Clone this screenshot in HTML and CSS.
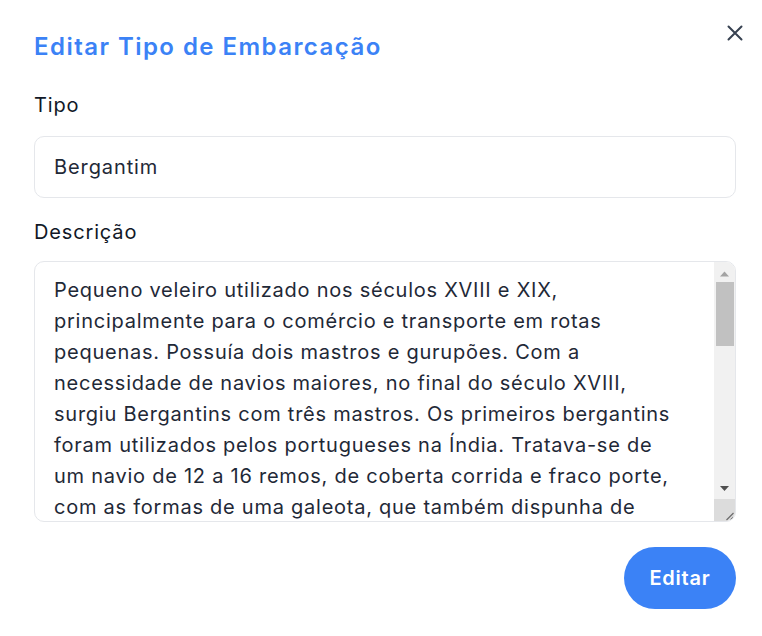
FILE: index.html
```html
<!DOCTYPE html>
<html lang="pt">
<head>
<meta charset="utf-8">
<title>Editar Tipo de Embarcação</title>
<link rel="stylesheet" href="styles.css">
</head>
<body>
<div class="modal">
  <div class="header">
    <h1 class="title">Editar Tipo de Embarcação</h1>
    <button class="close" aria-label="Fechar">
      <svg width="16" height="16" viewBox="0 0 16 16"><path d="M1.5 1.5L14.5 14.5M14.5 1.5L1.5 14.5" stroke="#374151" stroke-width="2" stroke-linecap="round"/></svg>
    </button>
  </div>
  <label class="label">Tipo</label>
  <input class="input" type="text" value="Bergantim">
  <label class="label label-desc">Descrição</label>
  <div class="area-wrap">
    <textarea class="textarea">Pequeno veleiro utilizado nos séculos XVIII e XIX, principalmente para o comércio e transporte em rotas pequenas. Possuía dois mastros e gurupões. Com a necessidade de navios maiores, no final do século XVIII, surgiu Bergantins com três mastros. Os primeiros bergantins foram utilizados pelos portugueses na Índia. Tratava-se de um navio de 12 a 16 remos, de coberta corrida e fraco porte, com as formas de uma galeota, que também dispunha de dois mastros e velas latinas, sendo muito usado como embarcação de guerra e de transporte de pessoas importantes.</textarea>
    <div class="scrollbar" aria-hidden="true">
      <div class="sb-btn">
        <svg width="21" height="20" viewBox="0 0 21 20"><polygon points="6,14.5 15,14.5 10.5,9.5" fill="#a3a3a3"/></svg>
      </div>
      <div class="sb-track"><div class="sb-thumb"></div></div>
      <div class="sb-btn">
        <svg width="21" height="20" viewBox="0 0 21 20"><polygon points="6,7 15,7 10.5,12" fill="#505050"/></svg>
      </div>
      <div class="sb-corner">
        <svg width="21" height="22" viewBox="0 0 21 22"><path d="M12.5 21L19.5 14M16.5 21L19.5 18" stroke="#6b6b6b" stroke-width="1.2"/></svg>
      </div>
    </div>
  </div>
  <div class="actions">
    <button class="btn">Editar</button>
  </div>
</div>
</body>
</html>
```

FILE: styles.css
```css
* { box-sizing: border-box; }
html, body { margin: 0; padding: 0; background: #ffffff; }
body { font-family: Inter, "Noto Sans", sans-serif; color: #111827; }
.modal { padding: 24px 19px 0 34px; display: flex; flex-direction: column; }
.header { display: flex; justify-content: space-between; align-items: flex-start; }
.title { margin: 8px 0 0 0; font-size: 24px; font-weight: 600; color: #3b82f6; line-height: 30px; letter-spacing: 1.45px; }
.close { background: none; border: none; padding: 0; margin: 1px 0 0 0; width: 16px; height: 16px; cursor: pointer; display: block; }
.close svg { display: block; }
.label { font-size: 20px; line-height: 28px; margin-top: 29px; color: #111827; letter-spacing: 0.85px; }
.input { margin-top: 17px; width: 702px; height: 62px; border: 1px solid #e5e7eb; border-radius: 10px; padding: 0 19px; font-family: Inter, sans-serif; font-size: 20px; color: #1f2937; outline: none; letter-spacing: 0.9px; }
.label-desc { margin-top: 20px; }
.area-wrap { position: relative; margin-top: 15px; width: 702px; height: 261px; }
.textarea { display: block; width: 702px; height: 261px; border: 1px solid #e5e7eb; border-radius: 10px; padding: 13px 53px 13px 19px; font-family: Inter, sans-serif; font-size: 20px; line-height: 31px; color: #1f2937; outline: none; resize: none; overflow: hidden; letter-spacing: 0.75px; scrollbar-width: none; }
.textarea::-webkit-scrollbar { display: none; }
.scrollbar { position: absolute; top: 1px; right: 1px; bottom: 1px; width: 21px; display: flex; flex-direction: column; background: #f1f1f1; border-radius: 0 9px 9px 0; overflow: hidden; }
.sb-btn { height: 20px; flex: none; }
.sb-btn svg, .sb-corner svg { display: block; }
.sb-track { flex: 1; padding: 0 1px 0 2px; }
.sb-thumb { height: 64px; background: #c1c1c1; }
.sb-corner { height: 22px; flex: none; background: #dcdcdc; }
.actions { display: flex; justify-content: flex-end; width: 702px; margin-top: 25px; }
.btn { background: #3b82f6; color: #ffffff; border: none; border-radius: 31px; height: 62px; width: 112px; font-family: Inter, sans-serif; font-size: 20px; font-weight: 600; cursor: pointer; letter-spacing: 0.8px; }
```
